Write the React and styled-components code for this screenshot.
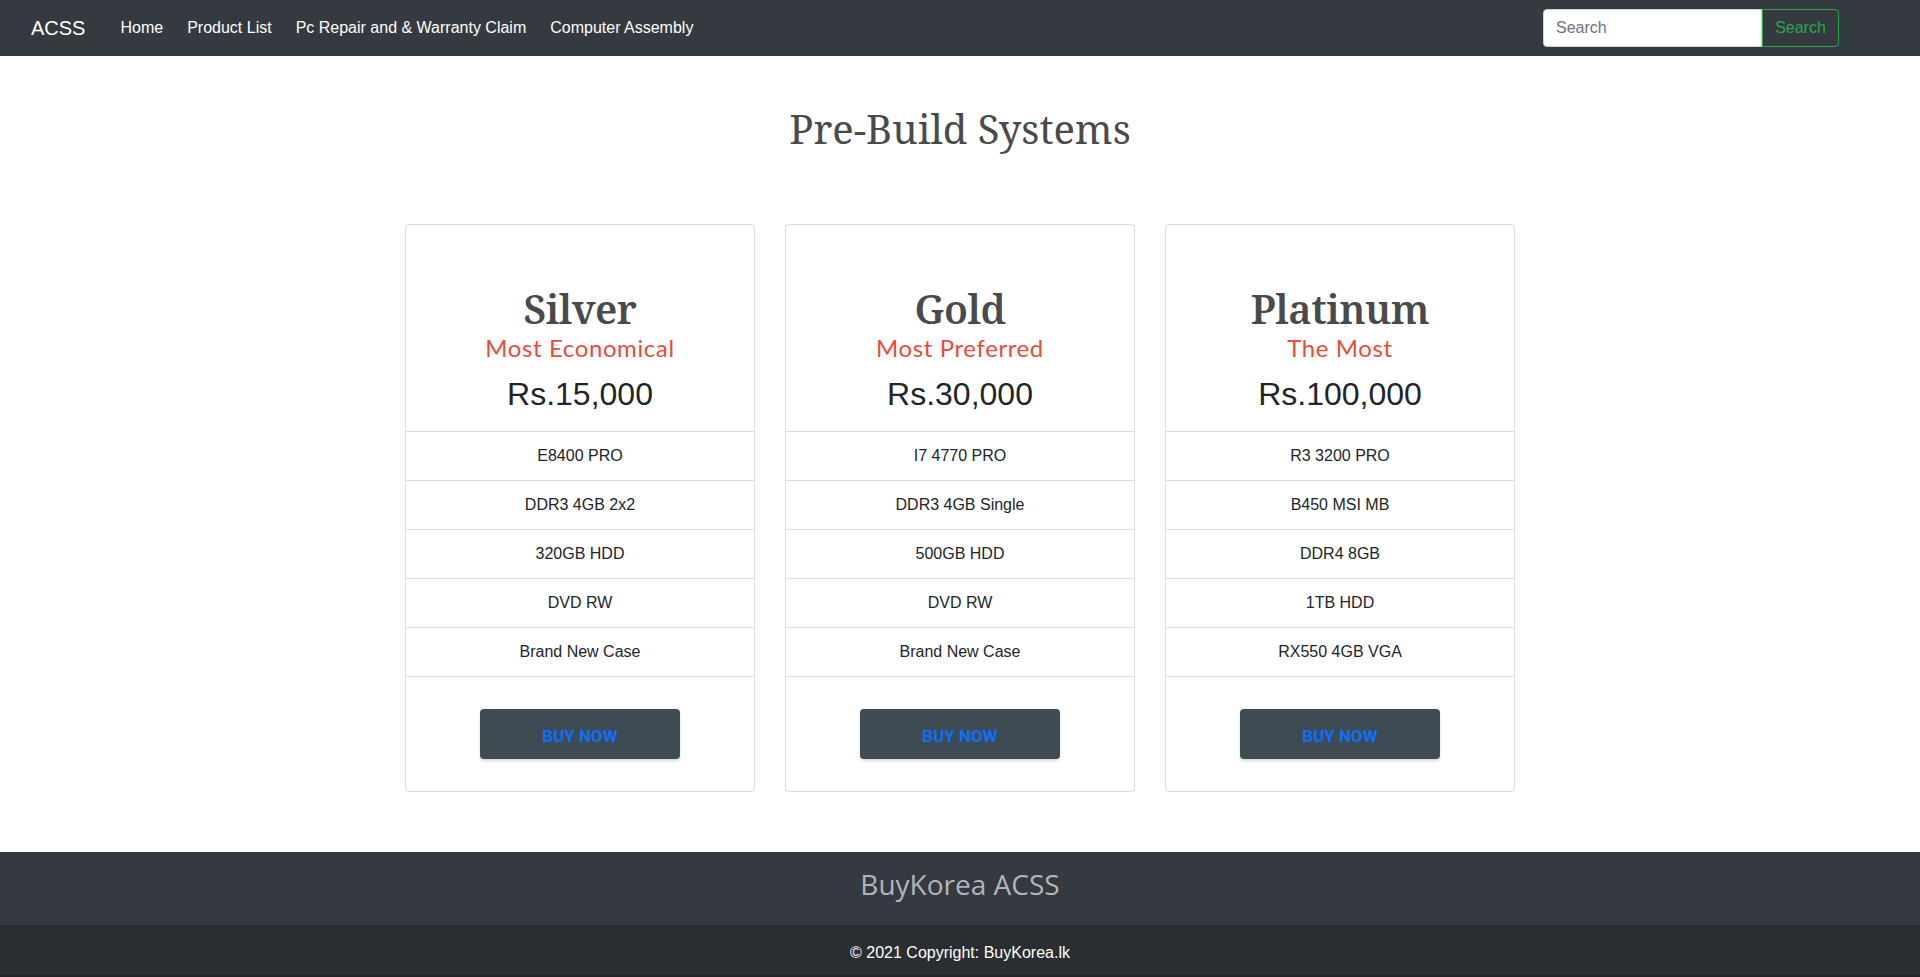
import React from "react";
import styled, { createGlobalStyle } from "styled-components";

const GlobalStyle = createGlobalStyle`
  html { background: #232529; }
  body {
    margin: 0;
    font-family: "Liberation Sans", Arial, sans-serif;
    font-size: 16px;
    color: #212529;
    background: #ffffff;
  }
  * { box-sizing: border-box; }
`;

const Page = styled.div`
  display: flex;
  flex-direction: column;
  background: #fff;
`;

const NavBar = styled.nav`
  height: 56px;
  background: #343a40;
  display: flex;
  align-items: center;
  padding: 0 81px 0 31px;
`;

const Brand = styled.a`
  color: #fff;
  font-size: 20px;
  line-height: 30px;
  text-decoration: none;
  margin-right: 35px;
`;

const NavLinks = styled.ul`
  display: flex;
  gap: 24px;
  list-style: none;
  margin: 0;
  padding: 0;
  flex: 1;
`;

const NavLink = styled.a`
  color: #fff;
  font-size: 16px;
  line-height: 24px;
  text-decoration: none;
`;

const SearchForm = styled.form`
  display: flex;
  align-items: center;
`;

const SearchInput = styled.input`
  width: 219px;
  height: 38px;
  border: 1px solid #ced4da;
  border-radius: 4px 0 0 4px;
  padding: 6px 12px;
  font-family: "Liberation Sans", Arial, sans-serif;
  font-size: 16px;
  color: #495057;
  background: #fff;
  outline: none;
  &::placeholder { color: #6c757d; }
`;

const SearchButton = styled.button`
  width: 77px;
  height: 38px;
  border: 1px solid #28a745;
  border-radius: 0 4px 4px 0;
  background: transparent;
  color: #28a745;
  font-family: "Liberation Sans", Arial, sans-serif;
  font-size: 16px;
  padding: 6px 12px;
`;

const Main = styled.main`
  display: flex;
  flex-direction: column;
  align-items: center;
  padding: 49px 0 60px;
`;

const Heading = styled.h1`
  margin: 0 0 71px;
  font-family: "Noto Serif", "DejaVu Serif", serif;
  font-weight: 400;
  font-size: 40px;
  line-height: 48px;
  color: #4a4a4a;
`;

const CardRow = styled.div`
  display: grid;
  grid-template-columns: repeat(3, 350px);
  gap: 30px;
`;

const Card = styled.div`
  border: 1px solid #dedede;
  border-radius: 4px;
  background: #fff;
  display: flex;
  flex-direction: column;
`;

const CardHeader = styled.div`
  display: flex;
  flex-direction: column;
  align-items: center;
  padding: 60px 0 18px;
`;

const PlanName = styled.h2`
  margin: 0;
  font-family: "Noto Serif", "DejaVu Serif", serif;
  font-weight: 600;
  font-size: 40px;
  line-height: 48px;
  letter-spacing: -0.5px;
  color: #4a4a4a;
`;

const Tagline = styled.div`
  font-family: "Lato", "Open Sans", sans-serif;
  font-weight: 400;
  font-size: 24px;
  line-height: 29px;
  letter-spacing: 0.6px;
  color: #e74c3c;
`;

const Price = styled.div`
  margin-top: 13px;
  font-size: 32px;
  line-height: 38px;
  color: #212529;
`;

const FeatureList = styled.ul`
  list-style: none;
  margin: 0;
  padding: 0;
`;

const Feature = styled.li`
  border-top: 1px solid #dedede;
  height: 49px;
  line-height: 48px;
  text-align: center;
  font-size: 16px;
  color: #212529;
`;

const CardFooter = styled.div`
  border-top: 1px solid #dedede;
  display: flex;
  justify-content: center;
  padding: 32px 0 32px;
`;

const BuyButton = styled.button`
  width: 200px;
  height: 50px;
  border: none;
  border-radius: 4px;
  background: #3e4b52;
  color: #0d6efd;
  font-family: "Roboto", "Liberation Sans", sans-serif;
  font-weight: 700;
  font-size: 17px;
  padding: 3px 0 0;
  box-shadow: 0 2px 3px rgba(0, 0, 0, 0.15);
  cursor: pointer;
`;

const Footer = styled.footer`
  background: #343a40;
  display: flex;
  flex-direction: column;
`;

const FooterTitle = styled.div`
  text-align: center;
  font-family: "Open Sans", sans-serif;
  font-size: 28px;
  line-height: 38px;
  color: #b1b5ba;
  padding: 13px 0 22px;
`;

const Copyright = styled.div`
  background: #2a2e33;
  text-align: center;
  color: #fff;
  font-size: 16px;
  line-height: 24px;
  padding: 16px 0 10px;
`;

const plans = [
  {
    name: "Silver",
    tagline: "Most Economical",
    price: "Rs.15,000",
    features: ["E8400 PRO", "DDR3 4GB 2x2", "320GB HDD", "DVD RW", "Brand New Case"],
  },
  {
    name: "Gold",
    tagline: "Most Preferred",
    price: "Rs.30,000",
    features: ["I7 4770 PRO", "DDR3 4GB Single", "500GB HDD", "DVD RW", "Brand New Case"],
  },
  {
    name: "Platinum",
    tagline: "The Most",
    price: "Rs.100,000",
    features: ["R3 3200 PRO", "B450 MSI MB", "DDR4 8GB", "1TB HDD", "RX550 4GB VGA"],
  },
];

export default function App() {
  return (
    <Page>
      <GlobalStyle />
      <NavBar>
        <Brand href="#">ACSS</Brand>
        <NavLinks>
          <li><NavLink href="#">Home</NavLink></li>
          <li><NavLink href="#">Product List</NavLink></li>
          <li><NavLink href="#">Pc Repair and &amp; Warranty Claim</NavLink></li>
          <li><NavLink href="#">Computer Assembly</NavLink></li>
        </NavLinks>
        <SearchForm onSubmit={(e) => e.preventDefault()}>
          <SearchInput type="search" placeholder="Search" />
          <SearchButton type="submit">Search</SearchButton>
        </SearchForm>
      </NavBar>
      <Main>
        <Heading>Pre-Build Systems</Heading>
        <CardRow>
          {plans.map((p) => (
            <Card key={p.name}>
              <CardHeader>
                <PlanName>{p.name}</PlanName>
                <Tagline>{p.tagline}</Tagline>
                <Price>{p.price}</Price>
              </CardHeader>
              <FeatureList>
                {p.features.map((f) => (
                  <Feature key={f}>{f}</Feature>
                ))}
              </FeatureList>
              <CardFooter>
                <BuyButton>BUY NOW</BuyButton>
              </CardFooter>
            </Card>
          ))}
        </CardRow>
      </Main>
      <Footer>
        <FooterTitle>BuyKorea ACSS</FooterTitle>
        <Copyright>© 2021 Copyright: BuyKorea.lk</Copyright>
      </Footer>
    </Page>
  );
}
